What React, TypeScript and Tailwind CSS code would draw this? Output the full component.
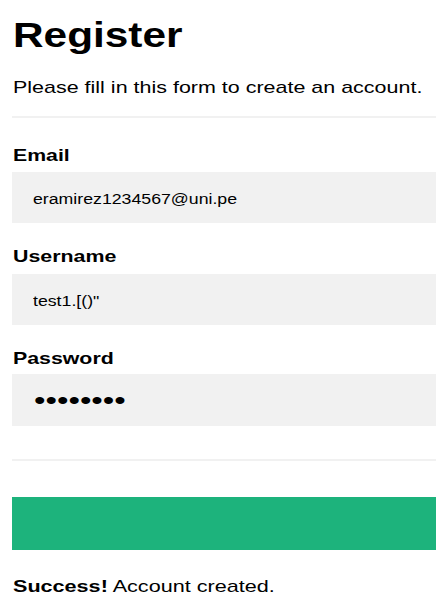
import React from "react";

export default function App() {
  const font = { fontFamily: '"Liberation Sans", Arial, sans-serif' };
  return (
    <div
      className="min-h-[611px] w-full overflow-hidden bg-white pl-3 pt-[15px] text-black"
      style={font}
    >
      <h1 className="ml-px block h-[40px] origin-left scale-x-[1.21] whitespace-nowrap text-[35px] font-bold leading-[40px]">
        Register
      </h1>
      <p className="ml-px mt-[23px] block h-[20px] origin-left scale-x-[1.263] whitespace-nowrap text-[17px] leading-[20px]">
        Please fill in this form to create an account.
      </p>
      <div className="mt-[18px] h-[2px] w-full bg-[#f1f1f1]" />

      <div className="mt-[28px] flex flex-col">
        <label className="ml-px block h-[20px] origin-left scale-x-[1.25] whitespace-nowrap text-[17px] font-bold leading-[20px]">
          Email
        </label>
        <div className="mt-[6px] h-[51px] w-full bg-[#f1f1f1] pl-[21px] pt-[19px]">
          <div className="origin-left scale-x-[1.265] whitespace-nowrap text-[14px] leading-[16px]">
            eramirez1234567@uni.pe
          </div>
        </div>

        <label className="ml-px mt-[24px] block h-[20px] origin-left scale-x-[1.258] whitespace-nowrap text-[17px] font-bold leading-[20px]">
          Username
        </label>
        <div className="mt-[7px] h-[51px] w-full bg-[#f1f1f1] pl-[21px] pt-[19px]">
          <div className="origin-left scale-x-[1.265] whitespace-nowrap text-[14px] leading-[16px]">
            test1.[()"
          </div>
        </div>

        <label className="ml-px mt-[24px] block h-[20px] origin-left scale-x-[1.254] whitespace-nowrap text-[17px] font-bold leading-[20px]">
          Password
        </label>
        <div className="mt-[5px] flex h-[52px] w-full items-center bg-[#f1f1f1] pl-[22px]">
          <div className="origin-left scale-x-[1.26] whitespace-nowrap text-[26px] leading-[26px]">
            ••••••••
          </div>
        </div>
      </div>

      <div className="mt-[33px] h-[2px] w-full bg-[#f1f1f1]" />

      <button className="mt-[36px] block h-[53px] w-full bg-[#1db37c]" />

      <p className="ml-px mt-[27px] block h-[20px] origin-left scale-x-[1.27] whitespace-nowrap text-[17px] leading-[20px]">
        <b className="font-bold">Success!</b> Account created.
      </p>
    </div>
  );
}
